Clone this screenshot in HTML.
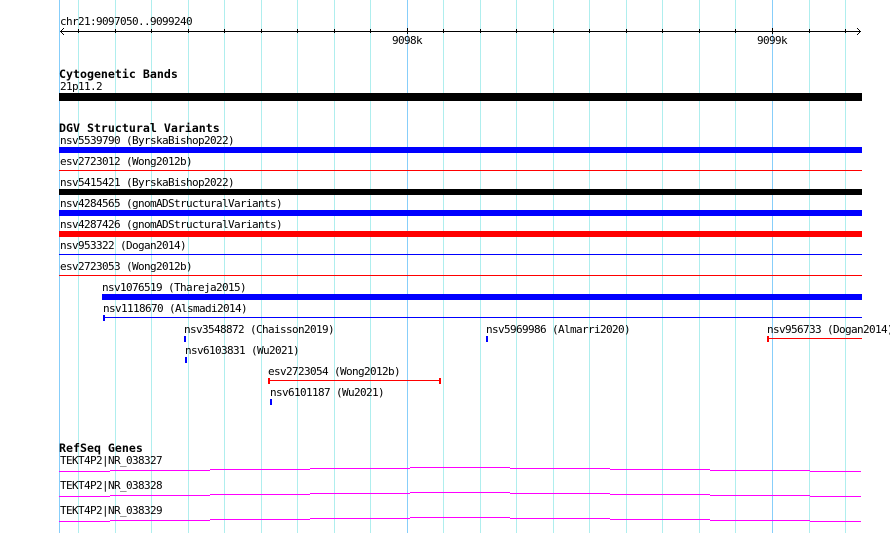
<!DOCTYPE html>
<html>
<head>
<meta charset="utf-8">
<style>
html,body{margin:0;padding:0;background:#fff;width:890px;height:533px;overflow:hidden}
svg{display:block;position:absolute;left:0;top:0}
text{font-family:"DejaVu Sans Mono","Liberation Mono",monospace;font-size:11px;letter-spacing:-0.622px;fill:#000;white-space:pre}
text.b{font-family:"DejaVu Sans Mono","Liberation Mono",monospace;font-weight:bold;font-size:11.62px;letter-spacing:0}
</style>
</head>
<body>
<svg width="890" height="533" viewBox="0 0 890 533" xmlns="http://www.w3.org/2000/svg" shape-rendering="crispEdges">
<g fill="#afeeee">
<rect x="78" y="0" width="1" height="533"/><rect x="115" y="0" width="1" height="533"/><rect x="151" y="0" width="1" height="533"/><rect x="188" y="0" width="1" height="533"/><rect x="224" y="0" width="1" height="533"/><rect x="261" y="0" width="1" height="533"/><rect x="297" y="0" width="1" height="533"/><rect x="334" y="0" width="1" height="533"/><rect x="370" y="0" width="1" height="533"/><rect x="443" y="0" width="1" height="533"/><rect x="480" y="0" width="1" height="533"/><rect x="516" y="0" width="1" height="533"/><rect x="553" y="0" width="1" height="533"/><rect x="589" y="0" width="1" height="533"/><rect x="626" y="0" width="1" height="533"/><rect x="662" y="0" width="1" height="533"/><rect x="699" y="0" width="1" height="533"/><rect x="735" y="0" width="1" height="533"/><rect x="809" y="0" width="1" height="533"/><rect x="845" y="0" width="1" height="533"/>
</g>
<g fill="#87cefa">
<rect x="59" y="0" width="1" height="533"/><rect x="407" y="0" width="1" height="533"/><rect x="772" y="0" width="1" height="533"/>
</g>

<!-- axis -->
<g fill="#000">
<rect x="60" y="31" width="801" height="1"/>
<rect x="78" y="29" width="1" height="4"/><rect x="115" y="29" width="1" height="4"/><rect x="151" y="29" width="1" height="4"/><rect x="188" y="29" width="1" height="4"/><rect x="224" y="29" width="1" height="4"/><rect x="261" y="29" width="1" height="4"/><rect x="297" y="29" width="1" height="4"/><rect x="334" y="29" width="1" height="4"/><rect x="370" y="29" width="1" height="4"/><rect x="407" y="28" width="1" height="6"/><rect x="443" y="29" width="1" height="4"/><rect x="480" y="29" width="1" height="4"/><rect x="516" y="29" width="1" height="4"/><rect x="553" y="29" width="1" height="4"/><rect x="589" y="29" width="1" height="4"/><rect x="626" y="29" width="1" height="4"/><rect x="662" y="29" width="1" height="4"/><rect x="699" y="29" width="1" height="4"/><rect x="735" y="29" width="1" height="4"/><rect x="772" y="28" width="1" height="6"/><rect x="809" y="29" width="1" height="4"/><rect x="845" y="29" width="1" height="4"/>
<rect x="60" y="31" width="1" height="1"/><rect x="61" y="30" width="1" height="3"/><rect x="62" y="29" width="1" height="1"/><rect x="62" y="33" width="1" height="1"/><rect x="63" y="28" width="1" height="1"/><rect x="63" y="34" width="1" height="1"/>
<rect x="860" y="31" width="1" height="1"/><rect x="859" y="30" width="1" height="3"/><rect x="858" y="29" width="1" height="1"/><rect x="858" y="33" width="1" height="1"/><rect x="857" y="28" width="1" height="1"/><rect x="857" y="34" width="1" height="1"/>
</g>

<!-- features -->
<rect x="59" y="93" width="803" height="8" fill="#000"/>
<rect x="59" y="147" width="803" height="6" fill="#0000ff"/>
<rect x="59" y="170" width="803" height="1" fill="#ff0000"/>
<rect x="59" y="189" width="803" height="6" fill="#000"/>
<rect x="59" y="210" width="803" height="6" fill="#0000ff"/>
<rect x="59" y="231" width="803" height="6" fill="#ff0000"/>
<rect x="59" y="254" width="803" height="1" fill="#0000ff"/>
<rect x="59" y="275" width="803" height="1" fill="#ff0000"/>
<rect x="102" y="294" width="760" height="6" fill="#0000ff"/>
<rect x="103" y="317" width="759" height="1" fill="#0000ff"/>
<rect x="103" y="315" width="2" height="6" fill="#0000ff"/>
<rect x="184" y="336" width="2" height="6" fill="#0000ff"/>
<rect x="486" y="336" width="2" height="6" fill="#0000ff"/>
<rect x="767" y="336" width="2" height="6" fill="#ff0000"/>
<rect x="767" y="338" width="95" height="1" fill="#ff0000"/>
<rect x="185" y="357" width="2" height="6" fill="#0000ff"/>
<rect x="268" y="378" width="2" height="6" fill="#ff0000"/>
<rect x="268" y="380" width="173" height="1" fill="#ff0000"/>
<rect x="439" y="378" width="2" height="6" fill="#ff0000"/>
<rect x="270" y="399" width="2" height="6" fill="#0000ff"/>

<!-- genes -->
<g fill="#ff00ff">
<rect x="59" y="471" width="51" height="1"/><rect x="110" y="470" width="100" height="1"/><rect x="210" y="469" width="100" height="1"/><rect x="310" y="468" width="100" height="1"/><rect x="410" y="467" width="100" height="1"/><rect x="510" y="468" width="100" height="1"/><rect x="610" y="469" width="100" height="1"/><rect x="710" y="470" width="100" height="1"/><rect x="810" y="471" width="51" height="1"/>
<rect x="59" y="496" width="51" height="1"/><rect x="110" y="495" width="100" height="1"/><rect x="210" y="494" width="100" height="1"/><rect x="310" y="493" width="100" height="1"/><rect x="410" y="492" width="100" height="1"/><rect x="510" y="493" width="100" height="1"/><rect x="610" y="494" width="100" height="1"/><rect x="710" y="495" width="100" height="1"/><rect x="810" y="496" width="51" height="1"/>
<rect x="59" y="521" width="51" height="1"/><rect x="110" y="520" width="100" height="1"/><rect x="210" y="519" width="100" height="1"/><rect x="310" y="518" width="100" height="1"/><rect x="410" y="517" width="100" height="1"/><rect x="510" y="518" width="100" height="1"/><rect x="610" y="519" width="100" height="1"/><rect x="710" y="520" width="100" height="1"/><rect x="810" y="521" width="51" height="1"/>
</g>

<!-- text -->
<text x="60" y="25">chr21:9097050..9099240</text>
<text x="392" y="44">9098k</text>
<text x="757" y="44">9099k</text>
<text class="b" x="59" y="78">Cytogenetic Bands</text>
<text x="60" y="90">21p11.2</text>
<text class="b" x="59" y="132">DGV Structural Variants</text>
<text x="60" y="144">nsv5539790 (ByrskaBishop2022)</text>
<text x="60" y="165">esv2723012 (Wong2012b)</text>
<text x="60" y="186">nsv5415421 (ByrskaBishop2022)</text>
<text x="60" y="207">nsv4284565 (gnomADStructuralVariants)</text>
<text x="60" y="228">nsv4287426 (gnomADStructuralVariants)</text>
<text x="60" y="249">nsv953322 (Dogan2014)</text>
<text x="60" y="270">esv2723053 (Wong2012b)</text>
<text x="102" y="291">nsv1076519 (Thareja2015)</text>
<text x="103" y="312">nsv1118670 (Alsmadi2014)</text>
<text x="184" y="333">nsv3548872 (Chaisson2019)</text>
<text x="486" y="333">nsv5969986 (Almarri2020)</text>
<text x="767" y="333">nsv956733 (Dogan2014)</text>
<text x="185" y="354">nsv6103831 (Wu2021)</text>
<text x="268" y="375">esv2723054 (Wong2012b)</text>
<text x="270" y="396">nsv6101187 (Wu2021)</text>
<text class="b" x="59" y="452">RefSeq Genes</text>
<text x="60" y="464">TEKT4P2|NR_038327</text>
<text x="60" y="489">TEKT4P2|NR_038328</text>
<text x="60" y="514">TEKT4P2|NR_038329</text>
</svg>
</body>
</html>
